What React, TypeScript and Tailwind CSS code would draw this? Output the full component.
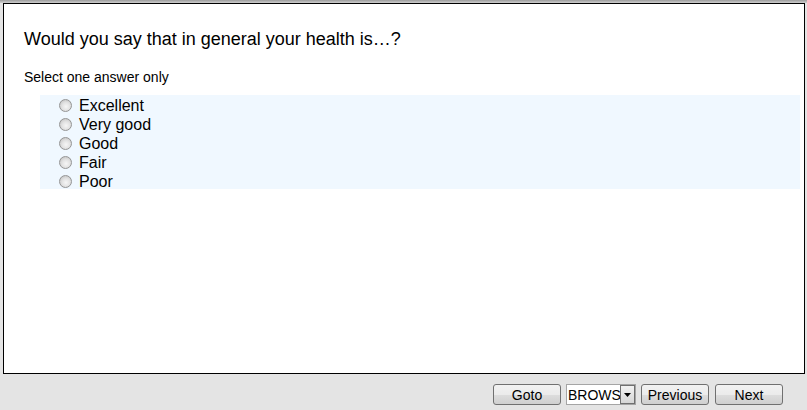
const options = ['Excellent', 'Very good', 'Good', 'Fair', 'Poor']

const Radio = () => (
  <span className="inline-block h-[13px] w-[13px] shrink-0 rounded-full border border-[#959595] bg-[radial-gradient(circle_at_55%_60%,#f6f6f6_0%,#e2e2e2_45%,#c4c4c4_85%,#d8d8d8_100%)]" />
)

const Button = ({ label, className }: { label: string; className?: string }) => (
  <button
    className={
      'flex h-[21px] items-center justify-center rounded-[3px] border border-[#707070] bg-[linear-gradient(#f2f2f2,#ebebeb_50%,#dddddd_51%,#cfcfcf)] text-[14px] leading-none text-black ' +
      (className ?? '')
    }
  >
    {label}
  </button>
)

export default function App() {
  return (
    <div className="flex h-[410px] w-[807px] flex-col bg-[#e4e4e4] font-['Liberation_Sans',Arial,sans-serif]">
      <div className="h-[3px] bg-[linear-gradient(#9c9c9c,#cfcfcf)]" />
      <div className="ml-[3px] mr-[2px] flex h-[371px] flex-col border border-black bg-white">
        <h1 className="pl-[20px] pt-[25px] text-[18px] leading-[21px] text-black">
          Would you say that in general your health is…?
        </h1>
        <p className="mt-[19px] pl-[20px] text-[14px] leading-[16px] text-black">Select one answer only</p>
        <div className="ml-[36px] mr-[4px] mt-[10px] h-[94px] bg-[#f0f8ff] pl-[19px] pt-[1px]">
          {options.map((o) => (
            <label key={o} className="flex h-[19px] items-center gap-[7px] text-[16px] leading-[19px] text-black">
              <Radio />
              {o}
            </label>
          ))}
        </div>
      </div>
      <div className="flex gap-[5px] pl-[493px] pt-[10px]">
        <Button label="Goto" className="w-[68px]" />
        <div className="flex h-[21px] w-[70px] items-center border border-[#a5a5a5] bg-white">
          <span className="w-[53px] overflow-hidden whitespace-nowrap pl-[1px] text-[14px] leading-none text-black">
            BROWSE
          </span>
          <span className="flex h-[19px] w-[15px] items-center justify-center border border-[#707070] bg-[linear-gradient(#f2f2f2,#d6d6d6)]">
            <svg width="7" height="4" viewBox="0 0 7 4">
              <path d="M0 0h7L3.5 4z" fill="#000" />
            </svg>
          </span>
        </div>
        <Button label="Previous" className="w-[68px]" />
        <Button label="Next" className="ml-[1px] w-[68px]" />
      </div>
    </div>
  )
}
